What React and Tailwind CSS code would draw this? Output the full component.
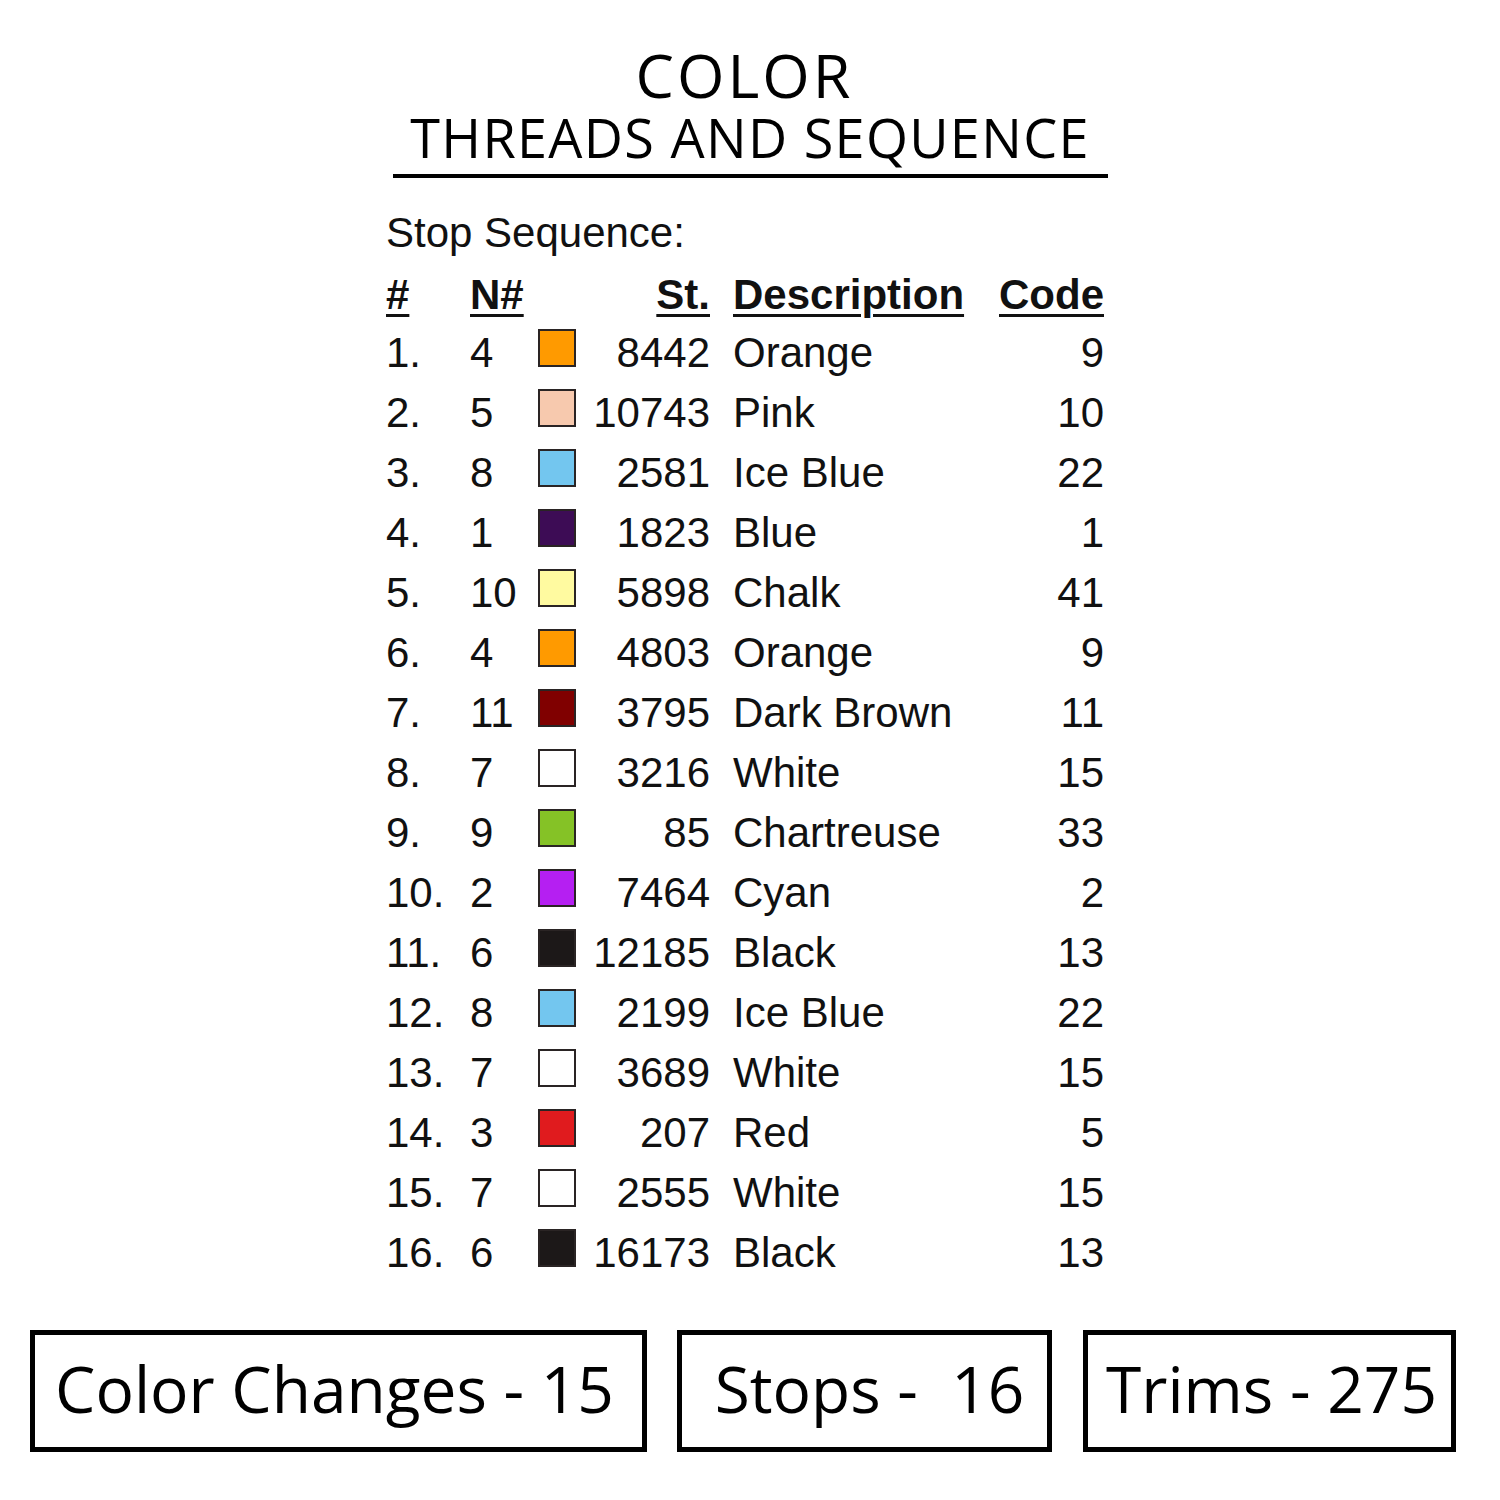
import React from "react";

const rows = [
  ["1.", "4", "#ff9a00", "8442", "Orange", "9"],
  ["2.", "5", "#f7c9ae", "10743", "Pink", "10"],
  ["3.", "8", "#73c6ef", "2581", "Ice Blue", "22"],
  ["4.", "1", "#3d0c55", "1823", "Blue", "1"],
  ["5.", "10", "#fffaa0", "5898", "Chalk", "41"],
  ["6.", "4", "#ff9a00", "4803", "Orange", "9"],
  ["7.", "11", "#800000", "3795", "Dark Brown", "11"],
  ["8.", "7", "#ffffff", "3216", "White", "15"],
  ["9.", "9", "#85c226", "85", "Chartreuse", "33"],
  ["10.", "2", "#b51ff2", "7464", "Cyan", "2"],
  ["11.", "6", "#1c1818", "12185", "Black", "13"],
  ["12.", "8", "#73c6ef", "2199", "Ice Blue", "22"],
  ["13.", "7", "#ffffff", "3689", "White", "15"],
  ["14.", "3", "#e01b1e", "207", "Red", "5"],
  ["15.", "7", "#ffffff", "2555", "White", "15"],
  ["16.", "6", "#1c1818", "16173", "Black", "13"],
];

const geo = { fontFamily: '"Open Sans", "Noto Sans", sans-serif' };
const arial = { fontFamily: '"Liberation Sans", Arial, sans-serif' };

export default function App() {
  return (
    <div className="w-[1500px] h-[1500px] bg-white text-[#111] flex flex-col">
      {/* Title */}
      <div className="pt-[45px] flex flex-col items-center" style={geo}>
        <div className="h-[60px] leading-[60px] text-[61px] tracking-[3px] pr-[11px] text-black">
          COLOR
        </div>
        <div className="h-[64px] leading-[64px] text-[54px] tracking-[1.3px] text-black">
          THREADS AND SEQUENCE
        </div>
      </div>
      <div className="mt-[5px] mx-auto w-[715px] h-[4px] bg-black" />

      {/* Table */}
      <div className="ml-[386px] w-[718px] mt-[25px] text-[42px]" style={arial}>
        <div className="h-[60px] leading-[60px]">Stop Sequence:</div>
        <div className="h-[58px] leading-[60px] flex font-bold mt-[2px]">
          <div className="w-[84px] shrink-0">
            <span className="underline decoration-[3px] underline-offset-[5px]">#</span>
          </div>
          <div className="w-[68px] shrink-0">
            <span className="underline decoration-[3px] underline-offset-[5px]">N#</span>
          </div>
          <div className="w-[38px] shrink-0" />
          <div className="w-[134px] shrink-0 text-right">
            <span className="underline decoration-[3px] underline-offset-[5px]">St.</span>
          </div>
          <div className="ml-[23px] flex-1">
            <span className="underline decoration-[3px] underline-offset-[5px]">Description</span>
          </div>
          <div className="shrink-0 text-right">
            <span className="underline decoration-[3px] underline-offset-[5px]">Code</span>
          </div>
        </div>
        {rows.map((r, i) => (
          <div key={i} className="h-[60px] leading-[60px] flex items-start">
            <div className="w-[84px] shrink-0">{r[0]}</div>
            <div className="w-[68px] shrink-0">{r[1]}</div>
            <div className="w-[38px] shrink-0 pt-[6px]">
              <div
                className="w-[38px] h-[38px] border-2 border-[#2a2424]"
                style={{ backgroundColor: r[2] }}
              />
            </div>
            <div className="w-[134px] shrink-0 text-right">{r[3]}</div>
            <div className="ml-[23px] flex-1">{r[4]}</div>
            <div className="shrink-0 text-right">{r[5]}</div>
          </div>
        ))}
      </div>

      {/* Bottom boxes */}
      <div className="mt-[47px] pl-[30px] flex gap-[30px]" style={geo}>
        <div className="w-[617px] h-[122px] border-[5px] border-black flex items-center justify-center text-[64px] text-black pb-[4px] pr-[8px]">
          Color Changes - 15
        </div>
        <div className="w-[375px] h-[122px] border-[5px] border-black flex items-center justify-center text-[64px] text-black pb-[4px] pl-[10px] whitespace-pre">
          {"Stops -  16"}
        </div>
        <div className="ml-[1px] w-[373px] h-[122px] border-[5px] border-black flex items-center justify-center text-[64px] text-black pb-[4px] pl-[4px]">
          Trims - 275
        </div>
      </div>
    </div>
  );
}
